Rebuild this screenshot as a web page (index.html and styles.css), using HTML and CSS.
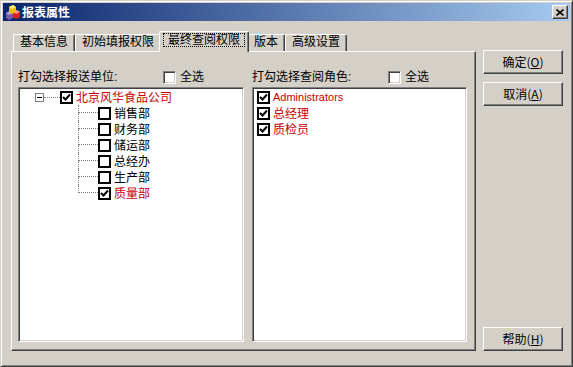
FILE: index.html
```html
<!DOCTYPE html>
<html lang="zh-CN">
<head>
    <meta charset="UTF-8">
    <title>报表属性</title>
    <link rel="stylesheet" href="styles.css">
</head>
<body>
    <div class="window">
        <div class="titlebar">
            <svg class="app-icon" width="16" height="16" viewBox="0 0 16 16">
                <polygon points="1,9 5,7 8,9 8,14 4,16 1,14" fill="#7a5aa8"/>
                <polygon points="1,9 5,7 8,9 4,11" fill="#b8a0e0"/>
                <polygon points="8,8 12,6 15,8 15,13 11,15 8,13" fill="#e02020"/>
                <polygon points="8,8 12,6 15,8 11,10" fill="#ff9090"/>
                <polygon points="4,3 8,1 11,3 11,8 7,10 4,8" fill="#e8c000"/>
                <polygon points="4,3 8,1 11,3 7,5" fill="#fff070"/>
            </svg>
            <span class="title">报表属性</span>
            <div class="close-btn">
                <svg width="8" height="7" viewBox="0 0 8 7">
                    <path d="M0.5 0.5 L7.5 6.5 M7.5 0.5 L0.5 6.5" stroke="#000" stroke-width="1.6"/>
                </svg>
            </div>
        </div>

        <div class="client">
            <div class="sheet">
                <div class="tabs">
                    <div class="tab">基本信息</div>
                    <div class="tab">初始填报权限</div>
                    <div class="tab active"><span class="focus">最终查阅权限</span></div>
                    <div class="tab">版本</div>
                    <div class="tab">高级设置</div>
                </div>

                <div class="panel">
                    <div class="group group-units">
                        <div class="group-head">
                            <span class="caption">打勾选择报送单位:</span>
                            <span class="check-all"><span class="box3d"></span>全选</span>
                        </div>
                        <div class="listbox tree">
                            <div class="tree-row root">
                                <span class="expander"><span class="minus"></span></span>
                                <span class="stub"></span>
                                <span class="chk checked"><svg width="9" height="9" viewBox="0 0 9 9"><polyline points="1,4 3.5,6.5 8,1.5" fill="none" stroke="#000" stroke-width="2"/></svg></span>
                                <span class="item red">北京风华食品公司</span>
                            </div>
                            <div class="tree-row child">
                                <span class="branch"><span class="half top"></span><span class="half"></span></span>
                                <span class="chk"></span>
                                <span class="item">销售部</span>
                            </div>
                            <div class="tree-row child">
                                <span class="branch"><span class="half top"></span><span class="half"></span></span>
                                <span class="chk"></span>
                                <span class="item">财务部</span>
                            </div>
                            <div class="tree-row child">
                                <span class="branch"><span class="half top"></span><span class="half"></span></span>
                                <span class="chk"></span>
                                <span class="item">储运部</span>
                            </div>
                            <div class="tree-row child">
                                <span class="branch"><span class="half top"></span><span class="half"></span></span>
                                <span class="chk"></span>
                                <span class="item">总经办</span>
                            </div>
                            <div class="tree-row child">
                                <span class="branch"><span class="half top"></span><span class="half"></span></span>
                                <span class="chk"></span>
                                <span class="item">生产部</span>
                            </div>
                            <div class="tree-row child">
                                <span class="branch last"><span class="half top"></span><span class="half"></span></span>
                                <span class="chk checked"><svg width="9" height="9" viewBox="0 0 9 9"><polyline points="1,4 3.5,6.5 8,1.5" fill="none" stroke="#000" stroke-width="2"/></svg></span>
                                <span class="item red">质量部</span>
                            </div>
                        </div>
                    </div>

                    <div class="group group-roles">
                        <div class="group-head">
                            <span class="caption">打勾选择查阅角色:</span>
                            <span class="check-all"><span class="box3d"></span>全选</span>
                        </div>
                        <div class="listbox roles">
                            <div class="list-row">
                                <span class="chk checked"><svg width="9" height="9" viewBox="0 0 9 9"><polyline points="1,4 3.5,6.5 8,1.5" fill="none" stroke="#000" stroke-width="2"/></svg></span>
                                <span class="item red latin">Administrators</span>
                            </div>
                            <div class="list-row">
                                <span class="chk checked"><svg width="9" height="9" viewBox="0 0 9 9"><polyline points="1,4 3.5,6.5 8,1.5" fill="none" stroke="#000" stroke-width="2"/></svg></span>
                                <span class="item red">总经理</span>
                            </div>
                            <div class="list-row">
                                <span class="chk checked"><svg width="9" height="9" viewBox="0 0 9 9"><polyline points="1,4 3.5,6.5 8,1.5" fill="none" stroke="#000" stroke-width="2"/></svg></span>
                                <span class="item red">质检员</span>
                            </div>
                        </div>
                    </div>
                </div>
            </div>

            <div class="actions">
                <div class="btn">确定(<u>O</u>)</div>
                <div class="btn">取消(<u>A</u>)</div>
                <div class="spacer"></div>
                <div class="btn">帮助(<u>H</u>)</div>
            </div>
        </div>
    </div>
</body>
</html>
```

FILE: styles.css
```css
:root {
    --face: #d4d0c8;
    --light: #ffffff;
    --shadow: #808080;
    --dark: #404040;
    --red: #c80000;
}

* {
    margin: 0;
    padding: 0;
    box-sizing: border-box;
}

body {
    font-family: "Liberation Sans", "Noto Sans CJK SC", sans-serif;
    font-size: 12px;
    line-height: 14px;
    color: #000;
    background: var(--face);
}

/* Window frame */
.window {
    width: 573px;
    height: 367px;
    display: flex;
    flex-direction: column;
    background: var(--face);
    border: 1px solid;
    border-color: var(--face) var(--dark) var(--dark) var(--face);
    box-shadow: inset 1px 1px var(--light), inset -1px -1px var(--shadow);
    padding: 2px;
}

.titlebar {
    height: 18px;
    display: flex;
    align-items: center;
    padding-left: 2px;
    background: linear-gradient(to right, #0a246a, #a6caf0);
}

.app-icon {
    flex: none;
}

.title {
    margin-left: 1px;
    color: #fff;
    font-weight: bold;
    font-family: "Noto Sans CJK SC", sans-serif;
    flex: 1;
}

.close-btn {
    width: 16px;
    height: 14px;
    margin-right: 2px;
    display: flex;
    align-items: center;
    justify-content: center;
    background: var(--face);
    border: 1px solid;
    border-color: var(--light) var(--dark) var(--dark) var(--light);
    box-shadow: inset -1px -1px var(--shadow);
}

/* Client area */
.client {
    flex: 1;
    display: flex;
    padding: 10px 0 0 8px;
}

.sheet {
    width: 465px;
    display: flex;
    flex-direction: column;
}

.tabs {
    height: 20px;
    display: flex;
    align-items: flex-end;
    padding-left: 2px;
}

.tab {
    height: 17px;
    padding: 0 6px;
    border-top: 1px solid var(--light);
    border-left: 1px solid var(--light);
    border-right: 1px solid var(--dark);
    border-radius: 2px 2px 0 0;
    box-shadow: inset -1px 0 var(--shadow);
    white-space: nowrap;
    background: var(--face);
}

.tab.active {
    height: 21px;
    margin: 0 -2px -1px;
    padding: 1px 3px 0 3px;
    position: relative;
    z-index: 1;
}

.tab .focus {
    display: block;
    padding: 0 4px;
    line-height: 12px;
    border: 1px dotted #000;
}

.panel {
    height: 300px;
    display: flex;
    gap: 8px;
    padding: 18px 0 0 6px;
    border-top: 1px solid var(--light);
    border-left: 1px solid var(--light);
    border-right: 1px solid var(--dark);
    border-bottom: 1px solid var(--dark);
    box-shadow: inset -1px -1px var(--shadow);
}

.group-units {
    width: 226px;
}

.group-roles {
    width: 215px;
}

.group-head {
    height: 14px;
    display: flex;
    align-items: center;
}

.group-units .caption {
    width: 145px;
}

.group-roles .caption {
    width: 136px;
}

.check-all {
    display: flex;
    align-items: center;
}

.box3d {
    width: 13px;
    height: 13px;
    margin-right: 4px;
    background: #fff;
    border: 1px solid;
    border-color: var(--shadow) var(--light) var(--light) var(--shadow);
    box-shadow: inset 1px 1px var(--dark), inset -1px -1px var(--face);
}

.listbox {
    height: 255px;
    margin-top: 3px;
    background: #fff;
    border: 1px solid;
    border-color: var(--shadow) var(--light) var(--light) var(--shadow);
    box-shadow: inset 1px 1px var(--dark), inset -1px -1px var(--face);
    padding: 1px 2px 2px;
}

/* Check boxes inside lists */
.chk {
    width: 13px;
    height: 13px;
    flex: none;
    border: 2px solid #000;
    background: #fff;
    display: flex;
    align-items: center;
    justify-content: center;
    margin-right: 3px;
}

.item {
    white-space: nowrap;
    font-family: "Noto Sans CJK SC", sans-serif;
}

.item.latin {
    font-family: "Liberation Sans", sans-serif;
    font-size: 11px;
}

.red {
    color: var(--red);
}

/* Tree */
.tree-row {
    height: 16px;
    display: flex;
    align-items: center;
}

.tree-row.root {
    padding-left: 14px;
}

.expander {
    width: 9px;
    height: 9px;
    flex: none;
    border: 1px solid var(--shadow);
    background: #fff;
    display: flex;
    align-items: center;
    justify-content: center;
}

.minus {
    width: 5px;
    height: 1px;
    background: #000;
}

.stub {
    width: 16px;
    height: 1px;
    border-top: 1px dotted var(--shadow);
}

.tree-row.child {
    padding-left: 57px;
}

.branch {
    width: 20px;
    height: 16px;
    flex: none;
    display: flex;
    flex-direction: column;
}

.half {
    height: 8px;
    border-left: 1px dotted var(--shadow);
}

.half.top {
    border-bottom: 1px dotted var(--shadow);
}

.branch.last .half:not(.top) {
    border-left: none;
}

/* Roles list */
.list-row {
    height: 16px;
    display: flex;
    align-items: center;
    padding-left: 2px;
}

/* Buttons */
.actions {
    width: 80px;
    height: 301px;
    margin: 19px 0 0 7px;
    display: flex;
    flex-direction: column;
    gap: 8px;
}

.spacer {
    flex: 1;
}

.btn {
    height: 24px;
    display: flex;
    align-items: center;
    justify-content: center;
    background: var(--face);
    border: 1px solid;
    border-color: var(--light) var(--dark) var(--dark) var(--light);
    box-shadow: inset -1px -1px var(--shadow);
    font-family: "Noto Sans CJK SC", sans-serif;
}

.btn u {
    text-decoration: underline;
}
```
